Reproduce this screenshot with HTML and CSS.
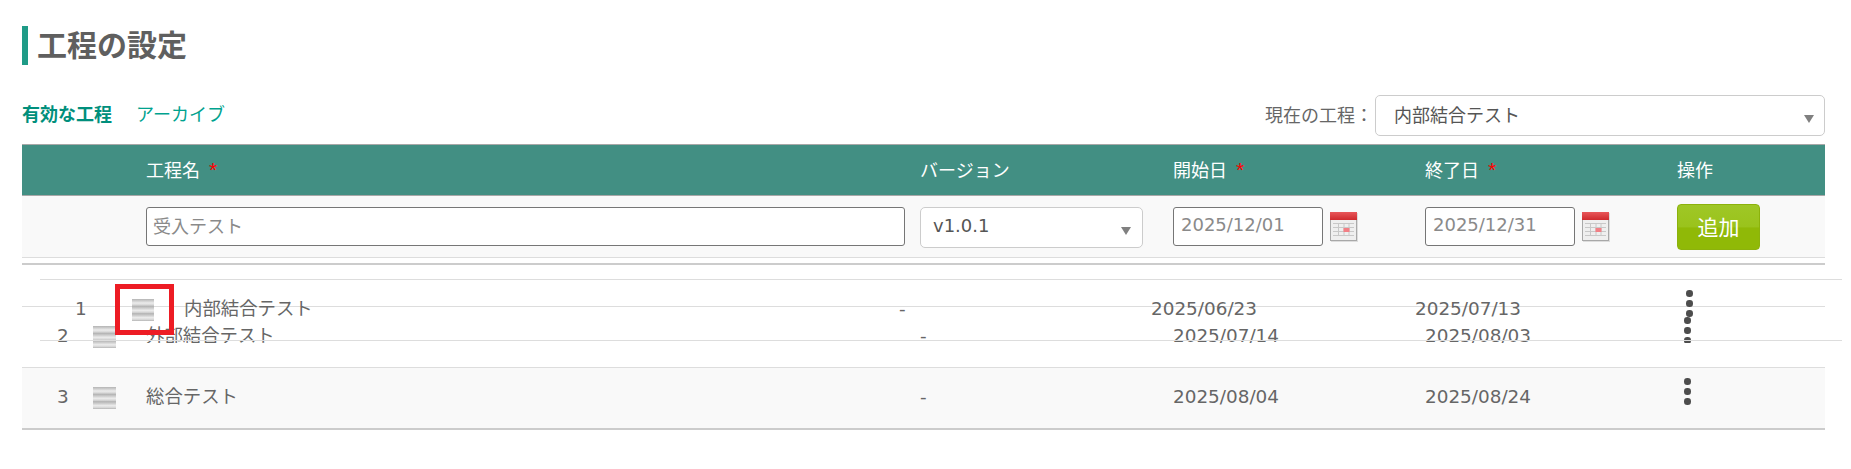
FILE: index.html
```html
<!DOCTYPE html>
<html lang="ja">
<head>
<meta charset="utf-8">
<title>工程の設定</title>
<link rel="stylesheet" href="styles.css">
</head>
<body>
<main class="page">
  <h1 class="title">工程の設定</h1>
  <div class="toolbar">
    <nav class="tabs">
      <a class="tab tab-active">有効な工程</a>
      <a class="tab">アーカイブ</a>
    </nav>
    <div class="current">
      <span class="current-label">現在の工程：</span>
      <div class="select select-current"><span>内部結合テスト</span><i class="arrow"></i></div>
    </div>
  </div>

  <div class="grid head">
    <div></div><div></div><div></div>
    <div>工程名<b class="req">*</b></div>
    <div>バージョン</div>
    <div>開始日<b class="req">*</b></div>
    <div>終了日<b class="req">*</b></div>
    <div>操作</div>
  </div>

  <div class="grid form">
    <div></div><div></div><div></div>
    <div class="cell-input"><div class="input input-name">受入テスト</div></div>
    <div class="cell-input"><div class="select select-version"><span>v1.0.1</span><i class="arrow"></i></div></div>
    <div class="cell-input date-field">
      <div class="input input-date">2025/12/01</div>
      <svg class="cal" viewBox="0 0 27 29"><use href="#cal"/></svg>
    </div>
    <div class="cell-input date-field">
      <div class="input input-date">2025/12/31</div>
      <svg class="cal" viewBox="0 0 27 29"><use href="#cal"/></svg>
    </div>
    <div class="cell-input"><button class="add">追加</button></div>
  </div>

  <div class="rows">
    <div class="placeholder"></div>

    <div class="grid row row-clipped">
      <div></div>
      <div class="num clip">2</div>
      <div class="handle-cell"><i class="handle"></i></div>
      <div class="clip">外部結合テスト</div>
      <div class="clip">-</div>
      <div class="clip">2025/07/14</div>
      <div class="clip">2025/08/03</div>
      <div class="clip"><div class="dots"><i></i><i></i><i></i></div></div>
    </div>

    <div class="grid row row-alt">
      <div></div>
      <div class="num">3</div>
      <div class="handle-cell"><i class="handle"></i></div>
      <div>総合テスト</div>
      <div>-</div>
      <div>2025/08/04</div>
      <div>2025/08/24</div>
      <div><div class="dots"><i></i><i></i><i></i></div></div>
    </div>

    <div class="dragged">
      <div></div>
      <div class="num">1</div>
      <div class="handle-cell"><i class="handle handle-small"></i></div>
      <div>内部結合テスト</div>
      <div>-</div>
      <div>2025/06/23</div>
      <div>2025/07/13</div>
      <div><div class="dots"><i></i><i></i><i></i></div></div>
      <div class="highlight"></div>
    </div>
  </div>
</main>

<svg class="defs" width="0" height="0">
  <defs>
    <linearGradient id="calred" x1="0" y1="0" x2="0" y2="1">
      <stop offset="0" stop-color="#e8575a"/>
      <stop offset="1" stop-color="#cf2a2e"/>
    </linearGradient>
    <symbol id="cal" viewBox="0 0 27 29">
      <rect x="0" y="0" width="27" height="29" fill="#d9d9d9"/>
      <rect x="0.5" y="7.5" width="26" height="21" fill="#efefef" stroke="#a8a8a8"/>
      <rect x="0" y="0" width="27" height="8" fill="url(#calred)"/>
      <path d="M3 11.5H24M3 15.5H24M3 19.5H24M3 23.5H24M8.5 11V24M14 11V24M19 11V24" stroke="#c8c8c8" fill="none"/>
      <rect x="13.5" y="16" width="6" height="4" fill="#f27f85"/>
    </symbol>
  </defs>
</svg>
</body>
</html>
```
FILE: styles.css
```css
* { box-sizing: border-box; }

html, body { margin: 0; padding: 0; background: #fff; }

body {
  font-family: "Noto Sans CJK JP", sans-serif;
  font-size: 18px;
  color: #666;
  overflow: hidden;
}

.page {
  padding: 26px 26px 0 22px;
}

.title {
  margin: 0;
  height: 39px;
  padding-left: 9px;
  border-left: 6px solid #1f9b87;
  font-size: 30px;
  font-weight: 700;
  line-height: 35px;
  color: #5f5f5f;
}

.toolbar {
  display: flex;
  justify-content: space-between;
  align-items: flex-start;
  height: 43px;
  margin-top: 29px;
  margin-bottom: 7px;
}

.tabs { display: flex; gap: 24px; }

.tab {
  color: #00a28e;
  line-height: 39px;
  height: 38px;
}

.tab-active { font-weight: 700; color: #008f7c; }

.current { display: flex; align-items: center; gap: 2px; margin-top: 1px; }

.current-label { margin-top: -4px; }

.select {
  display: flex;
  align-items: center;
  justify-content: space-between;
  background: #fff;
  border: 1px solid #ccc;
  border-radius: 5px;
  color: #555;
  white-space: nowrap;
  line-height: 1;
}

.select span { margin-top: -3px; }

.select-current { width: 450px; height: 41px; padding: 0 10px 0 18px; }

.select-version {
  width: 223px;
  height: 41px;
  padding: 0 11px 0 12px;
  font-family: "DejaVu Sans", sans-serif;
}

.arrow {
  width: 0;
  height: 0;
  margin-top: 7px;
  border-left: 5.5px solid transparent;
  border-right: 5.5px solid transparent;
  border-top: 8px solid #808080;
}

.grid {
  display: grid;
  grid-template-columns: 35px 36px 53px 774px 253px 252px 252px 1fr;
}

.head {
  height: 52px;
  padding-bottom: 2px;
  align-items: center;
  background: #428f83;
  border-top: 1px solid #a8a8a8;
  border-bottom: 1px solid #a8a8a8;
  color: #fff;
  line-height: 44px;
}

.req {
  margin-left: 9px;
  font-family: "Liberation Sans", sans-serif;
  font-size: 21px;
  font-weight: 400;
  line-height: 1;
  color: #f00;
}

.form {
  height: 62px;
  background: #f9f9f9;
  border-bottom: 1px solid #ddd;
}

.cell-input { padding-top: 11px; }

.input {
  height: 39px;
  background: #fff;
  border: 1px solid #767676;
  border-radius: 3px;
  color: #8a8a8a;
  line-height: 34px;
  padding-left: 6px;
  white-space: nowrap;
}

.input-name { width: 759px; }

.input-date {
  width: 150px;
  padding-left: 7px;
  font-family: "DejaVu Sans", sans-serif;
}

.date-field { display: flex; align-items: flex-start; gap: 7px; }

.cal {
  width: 27px;
  height: 29px;
  margin-top: 5px;
  filter: drop-shadow(1px 1px 0 #ddd);
}

.defs { position: absolute; }

.add {
  display: block;
  width: 83px;
  height: 46px;
  margin-top: -3px;
  padding: 0 0 3px;
  border: 1px solid #8cb20c;
  border-radius: 4px;
  background: linear-gradient(#9fc726 0, #9ac31c 50%, #90b907 52%, #90b907 100%);
  color: #fff;
  font-family: "Noto Sans CJK JP", sans-serif;
  font-size: 21px;
}

.rows {
  position: relative;
  margin-top: 5px;
  border-top: 2px solid #ccc;
  font-family: "DejaVu Sans", "Noto Sans CJK JP", sans-serif;
  font-size: 18.4px;
  white-space: nowrap;
}

.placeholder { height: 41px; }

.row {
  height: 61px;
  border-top: 1px solid #ddd;
  line-height: 58px;
}

.row-alt {
  background: #f9f9f9;
  height: 63px;
  border-bottom: 2px solid #ccc;
}

.row-clipped > .clip {
  height: 36px;
  overflow: hidden;
}

.handle-cell { display: flex; align-items: center; }

.handle {
  display: block;
  width: 23px;
  height: 22px;
  margin-top: -1px;
  background: repeating-linear-gradient(#b4b4b4 0, #cfcfcf 2px, #ececec 4px, #d6d6d6 6px, #b4b4b4 7.33px);
}

.handle-small { width: 22px; }

.dots {
  display: flex;
  flex-direction: column;
  gap: 3.5px;
  width: 7px;
  padding-top: 10px;
  margin-left: 7px;
}

.dots i {
  display: block;
  width: 6.5px;
  height: 6.5px;
  border-radius: 50%;
  background: #4d4d4d;
}

.dragged {
  position: absolute;
  top: 14px;
  left: 18px;
  width: 1802px;
  height: 62px;
  display: grid;
  grid-template-columns: 35px 57px 52px 715px 252px 264px 264px 1fr;
  border-top: 1px solid #ddd;
  border-bottom: 1px solid #ddd;
  line-height: 58px;
}

.highlight {
  position: absolute;
  left: 75px;
  top: 4px;
  width: 59px;
  height: 51px;
  border: 5px solid #ed1c24;
}
```
